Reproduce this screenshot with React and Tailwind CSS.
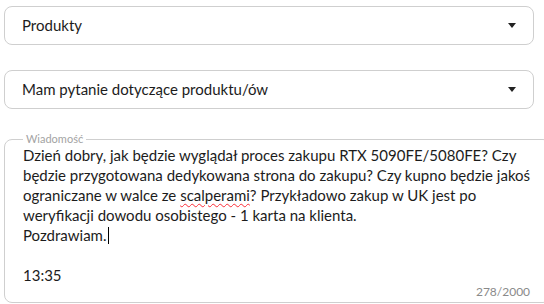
const font = { fontFamily: "Lato, 'Noto Sans', sans-serif" };

const Caret = () => (
  <svg width="8" height="5" viewBox="0 0 8 5" className="shrink-0">
    <path d="M0 0h8L4 5z" fill="#222" />
  </svg>
);

const Select = ({ label, className = "" }) => (
  <div
    className={`flex h-[39px] items-center justify-between rounded-lg border border-[#cfcfcf] bg-white pl-[17px] pr-[17px] ${className}`}
  >
    <span className="text-[15px] text-[#1c1c1c]">{label}</span>
    <Caret />
  </div>
);

export default function App() {
  return (
    <div className="h-[304px] w-[544px] overflow-hidden bg-white px-1 pt-[6px]" style={font}>
      <div className="w-[530px]">
        <Select label="Produkty" />
        <Select label="Mam pytanie dotyczące produktu/ów" className="mt-[25px]" />

        <fieldset className="mt-[24px] h-[170px] rounded-lg border border-[#cfcfcf] pl-[18px] pr-[20px]">
          <legend className="px-[3px] text-[11px] leading-[12px] text-[#a3a3a3]">
            Wiadomość
          </legend>
          <div className="whitespace-nowrap text-[15px] leading-[20px] text-[#1c1c1c]">
            <p>Dzień dobry, jak będzie wyglądał proces zakupu RTX 5090FE/5080FE? Czy</p>
            <p>będzie przygotowana dedykowana strona do zakupu? Czy kupno będzie jakoś</p>
            <p>
              ograniczane w walce ze{" "}
              <span className="underline decoration-red-500 decoration-wavy decoration-1 underline-offset-2">
                scalperami
              </span>
              ? Przykładowo zakup w UK jest po
            </p>
            <p>weryfikacji dowodu osobistego - 1 karta na klienta.</p>
            <p>
              Pozdrawiam.
              <span className="ml-px inline-block h-[17px] w-px bg-black align-[-3px]" />
            </p>
            <p className="mt-[20px]">13:35</p>
          </div>
          <div className="text-right text-[12px] leading-[14px] text-[#8a8a8a]">278/2000</div>
        </fieldset>
      </div>
    </div>
  );
}
